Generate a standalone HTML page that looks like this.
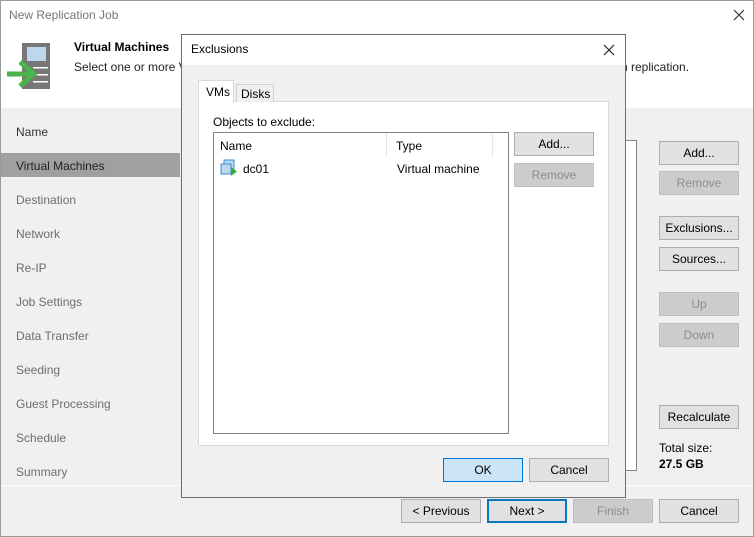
<!DOCTYPE html>
<html><head><meta charset="utf-8"><style>
*{box-sizing:border-box;margin:0;padding:0}
body{width:754px;height:537px;overflow:hidden;font-family:"Liberation Sans",sans-serif;font-size:12px;color:#000;background:#f0f0f0;position:relative}
.a{position:absolute;white-space:nowrap}
.btn{position:absolute;background:#e1e1e1;border:1px solid #adadad;text-align:center;line-height:22px;font-size:12px;color:#000}
.dis{background:#cccccc;border-color:#bfbfbf;color:#8d8d8d}
.side{position:absolute;left:16px;font-size:12px;color:#6d6d6d}
</style></head><body>
<div class="a" style="left:0;top:0;width:754px;height:537px;border:1px solid #9a9a9a"></div>
<div class="a" style="left:1px;top:1px;width:752px;height:107px;background:#fff"></div>
<div class="a" style="left:9px;top:8px;font-size:12px;color:#777">New Replication Job</div>
<svg class="a" style="left:733px;top:9px" width="12" height="12"><path d="M1 1L11 11M11 1L1 11" stroke="#333" stroke-width="1.2"/></svg>
<svg class="a" style="left:0;top:40px" width="56" height="52">
<rect x="22" y="3" width="28" height="46" fill="#777"/>
<rect x="27" y="7" width="19" height="14" fill="#bcd7ee"/>
<rect x="33" y="27" width="15" height="1.5" fill="#fff"/><rect x="33" y="34" width="15" height="1.5" fill="#fff"/><rect x="33" y="41" width="15" height="1.5" fill="#fff"/>
<path d="M7 34h24M20 22l14 12-14 12" stroke="#4db24b" stroke-width="5" fill="none"/>
</svg>
<div class="a" style="left:74px;top:40px;font-weight:bold;font-size:12px">Virtual Machines</div>
<div class="a" style="left:74px;top:60px;font-size:12px;color:#222">Select one or more VMs to process</div>
<div class="a" style="left:621px;top:60px;font-size:12px;color:#222">n replication.</div>
<div class="a" style="left:1px;top:108px;width:179px;height:378px;background:#f0f0f0"></div>
<div class="a" style="left:1px;top:153px;width:179px;height:24px;background:#a0a0a0"></div>
<div class="side" style="top:125px;color:#333">Name</div>
<div class="side" style="top:159px;color:#222">Virtual Machines</div>
<div class="side" style="top:193px">Destination</div>
<div class="side" style="top:227px">Network</div>
<div class="side" style="top:261px">Re-IP</div>
<div class="side" style="top:295px">Job Settings</div>
<div class="side" style="top:329px">Data Transfer</div>
<div class="side" style="top:363px">Seeding</div>
<div class="side" style="top:397px">Guest Processing</div>
<div class="side" style="top:431px">Schedule</div>
<div class="side" style="top:465px">Summary</div>
<div class="a" style="left:1px;top:485px;width:752px;height:1px;background:#fff"></div>
<div class="a" style="left:560px;top:140px;width:77px;height:331px;background:#fff;border:1px solid #828282;border-left:none"></div>
<div class="btn" style="left:659px;top:141px;width:80px;height:24px">Add...</div>
<div class="btn dis" style="left:659px;top:171px;width:80px;height:24px">Remove</div>
<div class="btn" style="left:659px;top:216px;width:80px;height:24px">Exclusions...</div>
<div class="btn" style="left:659px;top:247px;width:80px;height:24px">Sources...</div>
<div class="btn dis" style="left:659px;top:292px;width:80px;height:24px">Up</div>
<div class="btn dis" style="left:659px;top:323px;width:80px;height:24px">Down</div>
<div class="btn" style="left:659px;top:405px;width:80px;height:24px">Recalculate</div>
<div class="a" style="left:659px;top:441px">Total size:</div>
<div class="a" style="left:659px;top:457px;font-weight:bold">27.5 GB</div>
<div class="btn" style="left:401px;top:499px;width:80px;height:24px">&lt; Previous</div>
<div class="btn" style="left:487px;top:499px;width:80px;height:24px;border:2px solid #0a78bf;line-height:20px">Next &gt;</div>
<div class="btn dis" style="left:573px;top:499px;width:80px;height:24px">Finish</div>
<div class="btn" style="left:659px;top:499px;width:80px;height:24px">Cancel</div>
<!-- dialog -->
<div class="a" style="left:181px;top:34px;width:445px;height:464px;background:#f0f0f0;border:1px solid #6e6e6e"></div>
<div class="a" style="left:182px;top:35px;width:443px;height:30px;background:#fff"></div>
<div class="a" style="left:191px;top:42px">Exclusions</div>
<svg class="a" style="left:603px;top:44px" width="12" height="12"><path d="M1 1L11 11M11 1L1 11" stroke="#222" stroke-width="1.2"/></svg>
<div class="a" style="left:198px;top:101px;width:411px;height:345px;background:#fff;border:1px solid #d9d9d9"></div>
<div class="a" style="left:236px;top:84px;width:38px;height:18px;background:#f0f0f0;border:1px solid #d0d0d0;border-bottom:none;padding:2px 4px">Disks</div>
<div class="a" style="left:198px;top:80px;width:36px;height:23px;background:#fff;border:1px solid #d9d9d9;border-bottom:none;padding:4px 7px">VMs</div>
<div class="a" style="left:213px;top:115px">Objects to exclude:</div>
<div class="a" style="left:213px;top:132px;width:296px;height:302px;background:#fff;border:1px solid #828282"></div>
<div class="a" style="left:386px;top:133px;width:1px;height:24px;background:#e5e5e5"></div>
<div class="a" style="left:492px;top:133px;width:1px;height:24px;background:#e5e5e5"></div>
<div class="a" style="left:220px;top:139px">Name</div>
<div class="a" style="left:396px;top:139px">Type</div>
<svg class="a" style="left:220px;top:159px" width="18" height="18"><rect x="4" y="1" width="10" height="9" fill="#bcd7ee" stroke="#3d8ed0"/><rect x="1" y="5" width="10" height="10" fill="#bcd7ee" stroke="#3d8ed0"/><path d="M11 8l6 4.5-6 4.5z" fill="#3aad3a"/></svg>
<div class="a" style="left:243px;top:162px">dc01</div>
<div class="a" style="left:397px;top:162px">Virtual machine</div>
<div class="btn" style="left:514px;top:132px;width:80px;height:24px">Add...</div>
<div class="btn dis" style="left:514px;top:163px;width:80px;height:24px">Remove</div>
<div class="btn" style="left:443px;top:458px;width:80px;height:24px;background:#cce4f7;border-color:#0078d7">OK</div>
<div class="btn" style="left:529px;top:458px;width:80px;height:24px">Cancel</div>
</body></html>
